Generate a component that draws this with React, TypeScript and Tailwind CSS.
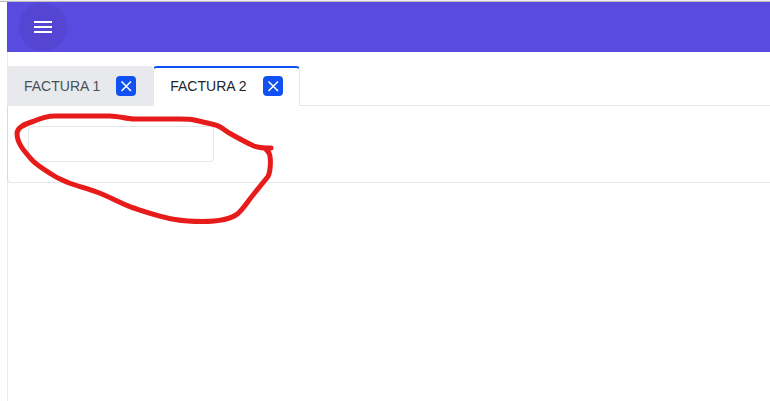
import { useState } from 'react'

interface Tab {
  id: number
  title: string
}

const initialTabs: Tab[] = [
  { id: 1, title: 'FACTURA 1' },
  { id: 2, title: 'FACTURA 2' },
]

export default function App() {
  const [tabs, setTabs] = useState<Tab[]>(initialTabs)
  const [activeId, setActiveId] = useState(2)
  const [values, setValues] = useState<Record<number, string>>({})

  const closeTab = (id: number) => {
    const rest = tabs.filter((tab) => tab.id !== id)
    setTabs(rest)
    if (id === activeId && rest.length > 0) {
      setActiveId(rest[rest.length - 1].id)
    }
  }

  return (
    <div className="min-h-screen border-t border-[#eeeeee] bg-white font-['Liberation_Sans',Arial,sans-serif]">
      <div className="h-px bg-[#bdbdbd]" />
      <div className="relative ml-[7px] flex min-h-[calc(100vh-2px)] flex-col">
        {/* Top bar */}
        <header className="flex h-[50px] items-center bg-[#594ae0] px-3">
          <button
            aria-label="Menu"
            className="flex h-12 w-12 items-center justify-center rounded-full bg-[#5446d3]"
          >
            <MenuIcon className="h-6 w-6 text-white" />
          </button>
        </header>

        <main className="flex-1 border-l border-[#ececec] pt-3.5">
          {/* Tab strip */}
          <div className="-ml-px flex border-b border-[#e6e7ea]">
            {tabs.map((tab) => (
              <TabHeader
                key={tab.id}
                title={tab.title}
                active={tab.id === activeId}
                onSelect={() => setActiveId(tab.id)}
                onClose={() => closeTab(tab.id)}
              />
            ))}
          </div>

          {/* Tab content */}
          <section className="-ml-px rounded-bl border-b border-l border-b-[#e6e7ea] border-l-[#d9dadd] px-5 py-5">
            <input
              type="text"
              aria-label="Factura"
              value={values[activeId] ?? ''}
              onChange={(e) => setValues({ ...values, [activeId]: e.target.value })}
              className="block h-9 w-[186px] rounded border border-[#e6e7ea] px-3 text-sm outline-none"
            />
          </section>
        </main>

        <Scribble className="pointer-events-none absolute left-0 top-0 h-[240px] w-[290px]" />
      </div>
    </div>
  )
}

interface TabHeaderProps {
  title: string
  active: boolean
  onSelect: () => void
  onClose: () => void
}

function TabHeader({ title, active, onSelect, onClose }: TabHeaderProps) {
  return (
    <div
      className={`-mb-px flex h-10 items-center gap-4 rounded-t border-x border-t-2 px-4 pb-0.5 ${
        active
          ? 'border-x-[#e6e7ea] border-t-[#1151f3] bg-white text-[#212529]'
          : 'rounded-b border-[#e8e9ed] bg-[#e8e9ed] text-[#495057]'
      }`}
    >
      <button onClick={onSelect} className="text-sm">
        {title}
      </button>
      <button
        onClick={onClose}
        aria-label={`Cerrar ${title}`}
        className="flex h-5 w-5 items-center justify-center rounded bg-[#1151f3] text-white"
      >
        <CloseIcon className="h-5 w-5" />
      </button>
    </div>
  )
}

// Icon components
function MenuIcon({ className }: { className?: string }) {
  return (
    <svg className={className} fill="currentColor" viewBox="0 0 24 24">
      <path d="M3 18h18v-2H3v2zm0-5h18v-2H3v2zm0-7v2h18V6H3z" />
    </svg>
  )
}

function CloseIcon({ className }: { className?: string }) {
  return (
    <svg className={className} fill="none" viewBox="0 0 20 20">
      <path d="M5.500 5.500l9.500 9.500M15 5.500l-9.500 9.500" stroke="currentColor" strokeWidth="1.5" />
    </svg>
  )
}

// Hand-drawn marker around the input
function Scribble({ className }: { className?: string }) {
  return (
    <svg className={className} fill="none" viewBox="7 2 290 240" aria-hidden="true">
      <path
        d="M271 148C264 148 259 148 254 146C247 143 238 138 230 133.5C225 131 222 127 217 125.5C210 123 202 122 194 120C190 119 185 119 180 119L134 119C126 119 119 116 110 116L55 116C47 116 41 118 33 121.5C25 124 17 127 17 133.5C17 144 25 152 33 161C38 166 45 170 52 174.5C57 178 62 180 68 182.500C77 186 88 188.500 98 192.500C110 197 120 203 132 207.500C146 212 160 217 175 219.500C184 221 193 221.500 202 221.500C214 221.500 230 220 238 213.500C244 208 248 201 253 195L268 176.500C271 170 271 157 269 153C267 150 266 149 264 148"
        stroke="#e81b1b"
        strokeWidth="5"
        strokeLinecap="round"
        strokeLinejoin="round"
      />
    </svg>
  )
}
